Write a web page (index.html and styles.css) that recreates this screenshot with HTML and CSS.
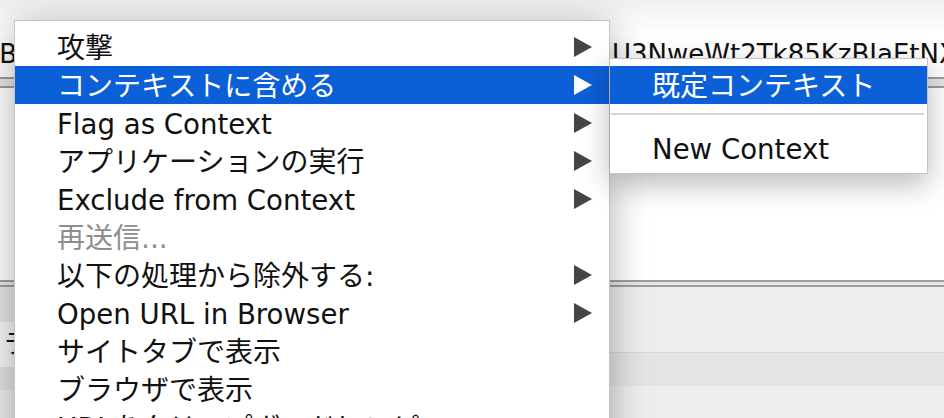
FILE: index.html
```html
<!DOCTYPE html>
<html lang="ja">
<head>
    <meta charset="UTF-8">
    <meta name="viewport" content="width=device-width, initial-scale=1.0">
    <title>Context Menu</title>
    <link rel="stylesheet" href="styles.css">
</head>
<body>
    <div class="app">
        <div class="url-row">
            <span class="url-head">aHR0cHM6Ly9leGFtcGxlZTB</span>
            <span class="url-tail">U3NweWt2Tk85KzBIaEtNXzQ1</span>
        </div>
        <div class="split"></div>
        <div class="editor"></div>
        <div class="split split-thin"></div>
        <div class="lower">
            <div class="tabs-col">
                <div class="tabs-top"></div>
                <div class="tab-label">ラ</div>
                <div class="tabs-bottom"></div>
            </div>
            <div class="lower-main">
                <div class="band"></div>
                <div class="band band-dark"></div>
            </div>
        </div>
    </div>

    <!-- popup menu -->
    <ul class="menu main-menu">
        <li class="item"><span>攻撃</span><i class="arrow"></i></li>
        <li class="item active"><span>コンテキストに含める</span><i class="arrow"></i></li>
        <li class="item latin"><span>Flag as Context</span><i class="arrow"></i></li>
        <li class="item"><span>アプリケーションの実行</span><i class="arrow"></i></li>
        <li class="item latin"><span>Exclude from Context</span><i class="arrow"></i></li>
        <li class="item disabled"><span>再送信...</span></li>
        <li class="item"><span>以下の処理から除外する:</span><i class="arrow"></i></li>
        <li class="item latin"><span>Open URL in Browser</span><i class="arrow"></i></li>
        <li class="item"><span>サイトタブで表示</span></li>
        <li class="item"><span>ブラウザで表示</span></li>
        <li class="item"><span>URLをクリップボードにコピー</span></li>
        <li class="item"><span>削除</span></li>
    </ul>

    <ul class="menu sub-menu">
        <li class="item active"><span>既定コンテキスト</span></li>
        <li class="separator"></li>
        <li class="item latin"><span>New Context</span></li>
    </ul>
</body>
</html>
```

FILE: styles.css
```css
html, body {
    margin: 0;
    padding: 0;
    width: 944px;
    height: 418px;
    overflow: hidden;
}
body {
    position: relative;
    background-color: #fff;
    font-family: "DejaVu Sans", "Noto Sans CJK JP", sans-serif;
    font-size: 28px;
    color: #111;
}

/* background window */
.app {
    display: flex;
    flex-direction: column;
    height: 418px;
}
.url-row {
    display: flex;
    height: 77px;
    box-sizing: border-box;
    padding-top: 41px;
    line-height: 26px;
    font-size: 26px;
    white-space: nowrap;
    overflow: hidden;
    background: linear-gradient(#f0f0f0, #fff 34px);
}
.url-head {
    display: flex;
    justify-content: flex-end;
    width: 17px;
    overflow: hidden;
    flex-shrink: 0;
}
.url-tail {
    margin-left: 595px;
}
.split {
    height: 7px;
    border-top: 2px solid #9d9d9d;
    border-bottom: 2px solid #9d9d9d;
    background-color: #e6e6e6;
}
.split-thin {
    height: 3px;
}
.editor {
    height: 192px;
    background-color: #fff;
}
.lower {
    display: flex;
    flex: 1;
}
.tabs-col {
    display: flex;
    flex-direction: column;
    width: 200px;
    background-color: #ededed;
}
.tabs-top {
    height: 35px;
    background-color: #e6e6e6;
}
.tab-label {
    height: 45px;
    padding-left: 3px;
    line-height: 45px;
    font-size: 26px;
    background-color: #f6f6f6;
}
.tabs-bottom {
    height: 23px;
    background-color: #e2e2e2;
}
.lower-main {
    flex: 1;
    background-color: #ededed;
}
.band {
    height: 65px;
    border-bottom: 1px solid #d6d6d6;
}
.band-dark {
    height: 33px;
    border-bottom: none;
    background-color: #e4e4e4;
}

/* popup menus */
.menu {
    position: absolute;
    margin: 0;
    list-style: none;
    box-sizing: border-box;
    background-color: #fff;
    border: 1px solid #c4c4c4;
}
.main-menu {
    left: 14px;
    top: 20px;
    width: 596px;
    padding: 7px 0;
    box-shadow: 0 6px 36px rgba(0, 0, 0, 0.32);
}
.sub-menu {
    left: 610px;
    top: 58px;
    width: 318px;
    padding: 7px 0 6px;
    border-left: none;
    box-shadow: 0 10px 28px rgba(0, 0, 0, 0.28);
}
.item {
    display: flex;
    align-items: center;
    justify-content: space-between;
    height: 38px;
    padding: 0 17px 0 42px;
    line-height: 38px;
    white-space: nowrap;
}
.item span {
    padding-top: 4px;
}
.latin {
    font-size: 27.6px;
}
.item.active {
    background-color: #0b5fd7;
    color: #fff;
}
.item.disabled {
    color: #8e8e8e;
}
.arrow {
    width: 0;
    height: 0;
    border-left: 18px solid #454545;
    border-top: 10px solid transparent;
    border-bottom: 10px solid transparent;
}
.active .arrow {
    border-left-color: #fff;
}
.separator {
    height: 2px;
    margin: 9px 3px 14px 1px;
    background-color: #d6d6d6;
}
```
